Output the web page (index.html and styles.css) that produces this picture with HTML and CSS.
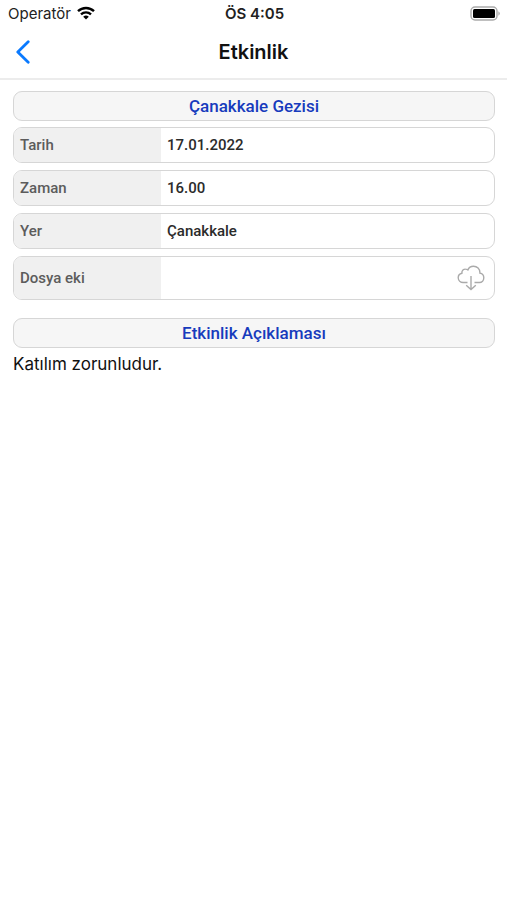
FILE: index.html
```html
<!DOCTYPE html>
<html lang="tr">
<head>
<meta charset="utf-8">
<meta name="viewport" content="width=device-width, initial-scale=1">
<title>Etkinlik</title>
<link rel="stylesheet" href="styles.css">
</head>
<body>
<div class="status">
  <div class="carrier">
    <span>Operatör</span>
    <svg class="wifi" viewBox="0 0 18 14" aria-hidden="true">
      <path d="M1 5.2a11.6 11.6 0 0 1 16 0" />
      <path d="M4 8.3a7.4 7.4 0 0 1 10 0" />
      <path class="fill" d="M9 13.6 6.2 10.8a4 4 0 0 1 5.6 0z" />
    </svg>
  </div>
  <span class="clock">ÖS 4:05</span>
  <svg class="battery" viewBox="0 0 31 15" aria-hidden="true">
    <rect class="shell" x="1" y="1" width="26" height="13" rx="4" />
    <rect class="charge" x="3" y="3" width="22" height="9" rx="1.5" />
    <path class="tip" d="M28.4 5.2a2.6 2.6 0 0 1 0 4.6z" />
  </svg>
</div>
<header class="nav">
  <button class="back" type="button" aria-label="Geri">
    <svg viewBox="0 0 16 24" aria-hidden="true"><path d="M13.2 1.8 2.8 12l10.4 10.2" /></svg>
  </button>
  <h1>Etkinlik</h1>
</header>
<main>
  <section class="details">
    <h2>Çanakkale Gezisi</h2>
    <dl>
      <div class="row"><dt>Tarih</dt><dd>17.01.2022</dd></div>
      <div class="row"><dt>Zaman</dt><dd>16.00</dd></div>
      <div class="row"><dt>Yer</dt><dd>Çanakkale</dd></div>
      <div class="row tall"><dt>Dosya eki</dt><dd>
        <button class="download" type="button" aria-label="Dosyayı indir">
          <svg viewBox="0 0 28 26" aria-hidden="true">
            <path d="M10.5 17.5H6.2A4.9 4.9 0 0 1 1.2 12.8C1.2 10.4 2.8 8.7 4.9 8.2 4.6 5.4 6.7 4 8.6 4.1c1 0 1.7.3 2.3.8C11.8 2.6 14 1.2 16.5 1.2c3.7 0 6.4 2.8 6.4 6.4v.5c2.2.3 3.9 2.3 3.9 4.7 0 2.7-1.9 4.7-4.4 4.7h-4.9" />
            <path d="M14 11v13.6M9.2 20.2l4.8 4.4 4.8-4.4" />
          </svg>
        </button>
      </dd></div>
    </dl>
  </section>
  <section>
    <h2>Etkinlik Açıklaması</h2>
    <p>Katılım zorunludur.</p>
  </section>
</main>
</body>
</html>
```
FILE: styles.css
```css
* {
  box-sizing: border-box;
}

body {
  margin: 0;
  background: #fff;
  color: #111;
  font-family: Roboto, "Liberation Sans", sans-serif;
}

h1, h2, p, dl, dd {
  margin: 0;
}

button {
  display: flex;
  padding: 0;
  border: 0;
  background: none;
}

svg {
  display: block;
  fill: none;
}

.status {
  display: grid;
  grid-template-columns: 1fr auto 1fr;
  align-items: center;
  height: 26px;
  padding: 0 6px 0 8px;
  font-family: Inter, sans-serif;
  font-size: 15px;
  color: #222;
}

.carrier {
  display: flex;
  align-items: center;
  gap: 6px;
}

.wifi {
  width: 18px;
  height: 14px;
  stroke: #000;
  stroke-width: 2.4;
}

.wifi .fill {
  fill: #000;
  stroke: none;
}

.clock {
  font-weight: 600;
}

.battery {
  width: 31px;
  height: 15px;
  justify-self: end;
}

.shell {
  stroke: #aaa;
  stroke-width: 1.4;
}

.charge {
  fill: #000;
}

.tip {
  fill: #aaa;
}

.nav {
  display: grid;
  grid-template-columns: 1fr auto 1fr;
  align-items: center;
  height: 54px;
  padding: 0 15px;
  border-bottom: 2px solid #ececec;
}

.back svg {
  width: 16px;
  height: 24px;
  stroke: #0a7aff;
  stroke-width: 2.8;
  stroke-linecap: round;
  stroke-linejoin: round;
}

h1 {
  font-family: Inter, sans-serif;
  font-size: 20px;
  font-weight: 600;
}

main {
  display: flex;
  flex-direction: column;
  gap: 18px;
  padding: 11px 12px 11px 13px;
}

h2 {
  height: 30px;
  border: 1px solid #d6d6d6;
  border-radius: 9px;
  background: #f6f6f6;
  color: #173bbd;
  font-size: 17px;
  font-weight: 500;
  line-height: 28px;
  text-align: center;
}

.details {
  display: flex;
  flex-direction: column;
  gap: 6px;
}

dl {
  display: flex;
  flex-direction: column;
  gap: 7px;
}

.row {
  display: grid;
  grid-template-columns: 147px 1fr;
  min-height: 36px;
  border: 1px solid #d6d6d6;
  border-radius: 9px;
  overflow: hidden;
  font-size: 15px;
  font-weight: 500;
}

.tall {
  min-height: 44px;
}

dt, dd {
  display: flex;
  align-items: center;
  padding: 0 6px;
}

dt {
  background: #f0f0f0;
  color: #5c5c5c;
}

dd {
  color: #2b2b2b;
}

.download {
  margin-left: auto;
}

.download svg {
  width: 34px;
  height: 26px;
  stroke: #aaa;
  stroke-width: 1.4;
}

p {
  padding-top: 5px;
  font-family: Inter, sans-serif;
  font-size: 17px;
  line-height: 22px;
}
```
